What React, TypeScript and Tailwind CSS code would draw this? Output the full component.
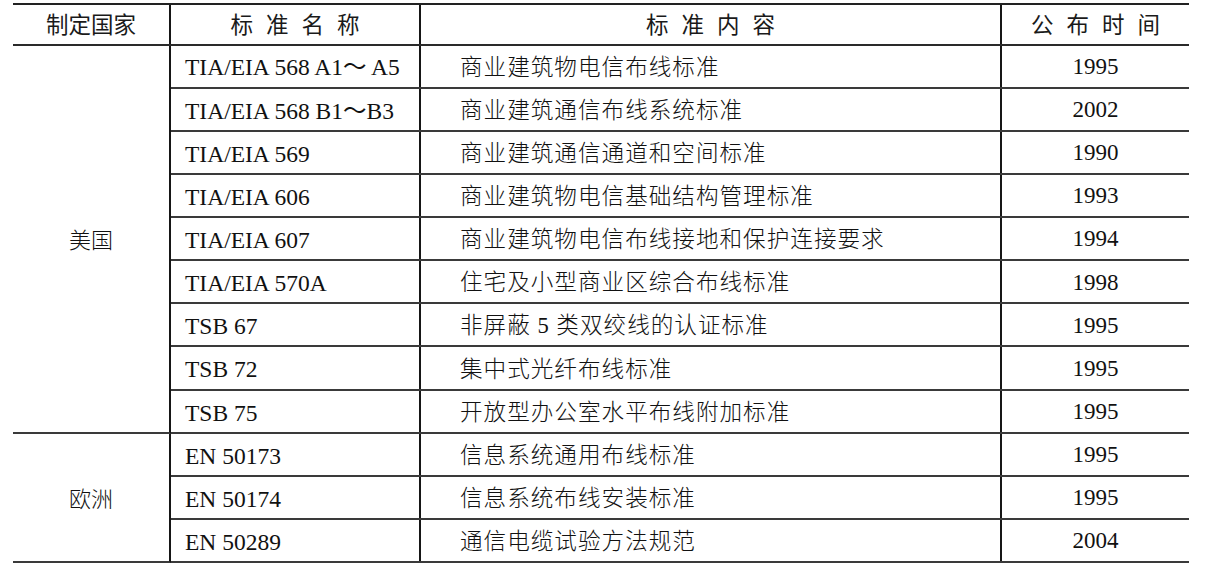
import React from "react";

type Row = [string, string, string];

const usa: Row[] = [
  ["TIA/EIA 568 A1～ A5", "商业建筑物电信布线标准", "1995"],
  ["TIA/EIA 568 B1～B3", "商业建筑通信布线系统标准", "2002"],
  ["TIA/EIA 569", "商业建筑通信通道和空间标准", "1990"],
  ["TIA/EIA 606", "商业建筑物电信基础结构管理标准", "1993"],
  ["TIA/EIA 607", "商业建筑物电信布线接地和保护连接要求", "1994"],
  ["TIA/EIA 570A", "住宅及小型商业区综合布线标准", "1998"],
  ["TSB 67", "非屏蔽 5 类双绞线的认证标准", "1995"],
  ["TSB 72", "集中式光纤布线标准", "1995"],
  ["TSB 75", "开放型办公室水平布线附加标准", "1995"],
];

const europe: Row[] = [
  ["EN 50173", "信息系统通用布线标准", "1995"],
  ["EN 50174", "信息系统布线安装标准", "1995"],
  ["EN 50289", "通信电缆试验方法规范", "2004"],
];

function DataRow({ r }: { r: Row }) {
  return (
    <div className="flex h-[43.15px] border-b-2 border-[#3a3a3a] text-[#111]">
      <div className="w-[250px] border-r-2 border-[#161616] flex items-center pl-[14px] pt-[4px] text-[23.5px] [font-family:'Liberation_Serif','Noto_Sans_CJK_SC',serif]">
        {r[0]}
      </div>
      <div className="w-[581px] border-r-2 border-[#161616] flex items-center pl-[39px] pt-[3px] text-[22.6px] tracking-[1px] font-light [font-family:'Liberation_Serif','Noto_Sans_CJK_SC',serif]">
        {r[1]}
      </div>
      <div className="flex-1 flex items-center justify-center pt-[2px] text-[23px] [font-family:'Liberation_Serif',serif]">
        {r[2]}
      </div>
    </div>
  );
}

function Section({ name, rows }: { name: string; rows: Row[] }) {
  return (
    <div className="flex">
      <div className="w-[158px] border-r-2 border-[#161616] border-b-2 border-b-[#3a3a3a] flex items-center justify-center text-[22px] font-light text-[#111] [font-family:'Noto_Sans_CJK_SC',sans-serif]">
        {name}
      </div>
      <div className="flex-1 flex flex-col">
        {rows.map((r, i) => (
          <DataRow key={i} r={r} />
        ))}
      </div>
    </div>
  );
}

export default function App() {
  return (
    <div className="w-[1205px] h-[577px] bg-white pt-[3px] pl-[13px]">
      <div className="w-[1176px] border-t-2 border-[#222]">
        <div className="flex h-[40.5px] border-b-2 border-[#2a2a2a] text-[22.5px] text-[#1a1a1a] [font-family:'Noto_Sans_CJK_SC',sans-serif] [word-spacing:8px]">
          <div className="w-[158px] border-r-2 border-[#161616] flex items-center justify-center">
            制定国家
          </div>
          <div className="w-[250px] border-r-2 border-[#161616] flex items-center justify-center">
            标 准 名 称
          </div>
          <div className="w-[581px] border-r-2 border-[#161616] flex items-center justify-center">
            标 准 内 容
          </div>
          <div className="flex-1 flex items-center justify-center">公 布 时 间</div>
        </div>
        <Section name="美国" rows={usa} />
        <Section name="欧洲" rows={europe} />
      </div>
    </div>
  );
}
